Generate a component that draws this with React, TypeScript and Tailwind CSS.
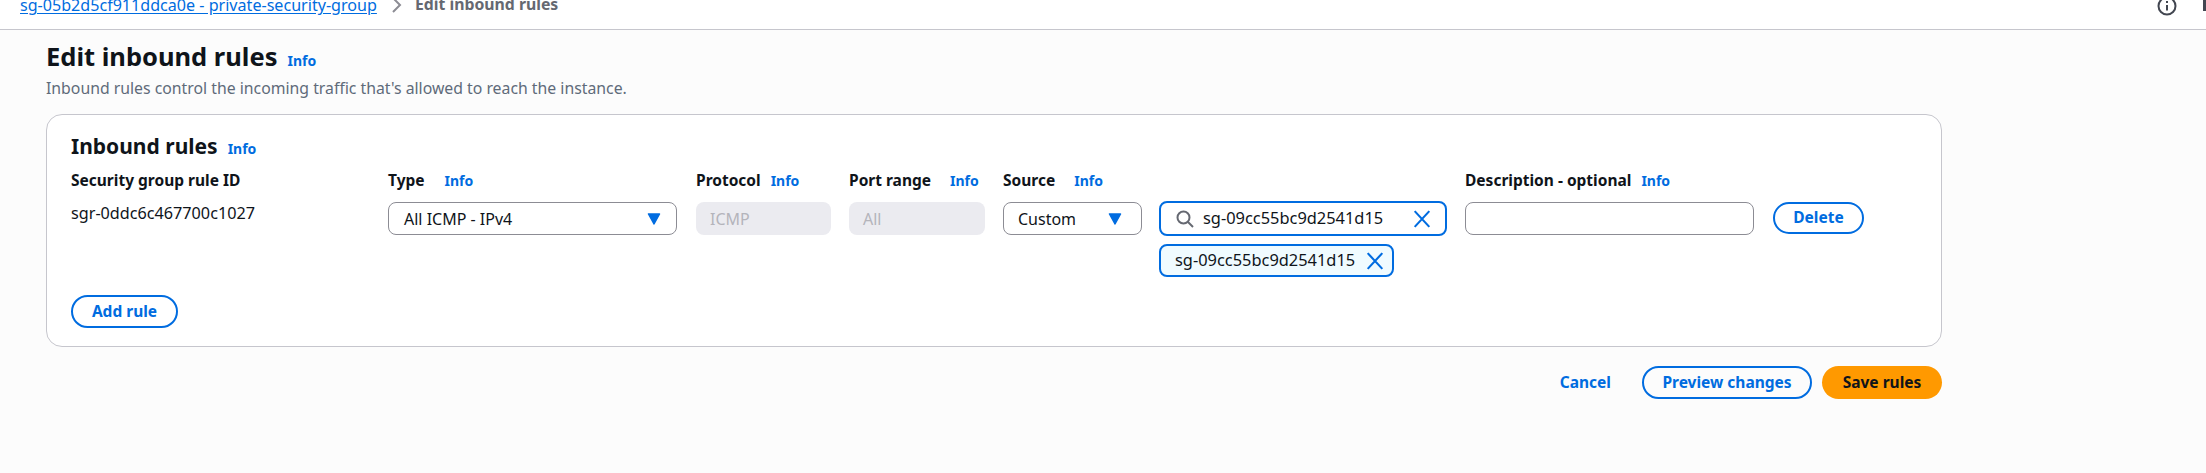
import React from "react";

const font = "font-['Noto_Sans',sans-serif]";

const Info = ({ className = "" }: { className?: string }) => (
  <a className={`text-[14px] leading-[18px] font-bold text-[#006ce0] ${className}`}>Info</a>
);

const Caret = () => (
  <svg width="14" height="12" viewBox="0 0 14 12" className="shrink-0">
    <path d="M1.5 1h11L7 11z" fill="#006ce0" stroke="#006ce0" strokeWidth="1.5" strokeLinejoin="round" />
  </svg>
);

const Cross = ({ size = 18 }: { size?: number }) => (
  <svg width={size} height={size} viewBox="0 0 16 16" className="shrink-0">
    <path d="M1.5 1l13 14M14.5 1l-13 14" stroke="#006ce0" strokeWidth="1.9" fill="none" />
  </svg>
);

const Header = ({ label, gap }: { label: string; gap?: string }) => (
  <div className={`flex items-center ${gap} h-5`}>
    <span className="text-[15.5px] font-bold text-[#0f141a]">{label}</span>
    {gap && <Info />}
  </div>
);

const PillButton = ({ label, className }: { label: string; className: string }) => (
  <button className={`flex items-center justify-center rounded-full border-2 border-[#006ce0] text-[15.5px] font-bold text-[#006ce0] ${className}`}>
    {label}
  </button>
);

export default function App() {
  return (
    <div className={`${font} w-[2206px] h-[473px] overflow-hidden bg-[#fcfcfc]`}>
      <div className="flex items-start h-[30px] overflow-hidden bg-white border-b border-[#c6c6cd] pl-[20px]">
        <div className="flex items-center -mt-[7px] h-[24px] text-[16.1px]">
          <a className="text-[#006ce0] underline underline-offset-2">sg-05b2d5cf911ddca0e - private-security-group</a>
          <svg width="12" height="16" viewBox="0 0 12 16" className="ml-[13px] mr-[13px]">
            <path d="M3 1l7 7-7 7" stroke="#8c8c94" strokeWidth="2" fill="none" />
          </svg>
          <span className="text-[15.8px] font-bold text-[#656871]">Edit inbound rules</span>
        </div>
        <div className="ml-auto flex items-start -mt-[4px] gap-[26px]">
          <svg width="20" height="20" viewBox="0 0 20 20">
            <circle cx="10" cy="10" r="8.5" stroke="#424650" strokeWidth="2" fill="none" />
            <path d="M10 9v5.5M10 5v2" stroke="#424650" strokeWidth="2" />
          </svg>
          <div className="w-[3px] h-[15px] bg-[#424650]" />
        </div>
      </div>

      <div className="pl-[46px] pr-[264px]">
        <div className="flex items-baseline gap-[10px] mt-[7px] h-[38px]">
          <h1 className="text-[25.5px] leading-[38px] font-bold text-[#0f141a]">Edit inbound rules</h1>
          <Info />
        </div>
        <p className="text-[15.8px] leading-[24px] mt-[1px] text-[#5f6b7a]">
          Inbound rules control the incoming traffic that's allowed to reach the instance.
        </p>

        <div className="mt-[14px] h-[233px] rounded-[16px] border border-[#c6c6cd] bg-white pl-[24px] pt-[17px]">
          <div className="flex items-baseline gap-[10px] h-[28px]">
            <h2 className="text-[21px] leading-[28px] font-bold text-[#0f141a]">Inbound rules</h2>
            <Info />
          </div>
          <div className="grid grid-cols-[317px_308px_153px_154px_156px_306px_auto] mt-[11px]">
            <Header label="Security group rule ID" />
            <Header label="Type" gap="gap-[20px]" />
            <Header label="Protocol" gap="gap-[10px]" />
            <Header label="Port range" gap="gap-[19px]" />
            <Header label="Source" gap="gap-[19px]" />
            <div />
            <Header label="Description - optional" gap="gap-[10px]" />
            <div className="row-start-2 pt-[12px] text-[16.2px] leading-[20px] text-[#0f141a]">sgr-0ddc6c467700c1027</div>
            <div className="row-start-2 col-start-2 pt-[11px]">
              <div className="flex items-center justify-between w-[289px] h-[33px] pl-[15px] pr-[15px] rounded-[8px] border border-[#8c8c94] bg-white text-[16px] text-[#0f141a]">
                All ICMP - IPv4
                <Caret />
              </div>
            </div>
            <div className="row-start-2 col-start-3 pt-[11px]">
              <div className="flex items-center w-[135px] h-[33px] pl-[14px] rounded-[8px] bg-[#ebebf0] text-[16px] text-[#b4b4bb]">ICMP</div>
            </div>
            <div className="row-start-2 col-start-4 pt-[11px]">
              <div className="flex items-center w-[136px] h-[33px] pl-[14px] rounded-[8px] bg-[#ebebf0] text-[16px] text-[#b4b4bb]">All</div>
            </div>
            <div className="row-start-2 col-start-5 pt-[11px]">
              <div className="flex items-center justify-between w-[139px] h-[33px] pl-[14px] pr-[19px] rounded-[8px] border border-[#8c8c94] bg-white text-[16px] text-[#0f141a]">
                Custom
                <Caret />
              </div>
            </div>
            <div className="row-start-2 col-start-6 pt-[10px] flex flex-col gap-[8px]">
              <div className="flex items-center w-[288px] h-[35px] pl-[14px] pr-[14px] rounded-[8px] border-2 border-[#006ce0] bg-white text-[16.4px] text-[#0f141a]">
                <svg width="20" height="20" viewBox="0 0 20 20" className="shrink-0 mr-[8px]">
                  <circle cx="8.5" cy="8.5" r="6" stroke="#656871" strokeWidth="2" fill="none" />
                  <path d="M13 13l5 5" stroke="#656871" strokeWidth="2" />
                </svg>
                <span>sg-09cc55bc9d2541d15</span>
                <span className="ml-auto"><Cross /></span>
              </div>
              <div className="flex items-center w-[235px] h-[33px] pl-[14px] pr-[8px] rounded-[8px] border-2 border-[#006ce0] bg-[#f0fbff] text-[16.4px] text-[#0f141a]">
                <span>sg-09cc55bc9d2541d15</span>
                <span className="ml-auto"><Cross /></span>
              </div>
            </div>
            <div className="row-start-2 col-start-7 pt-[11px] flex gap-[19px]">
              <div className="w-[289px] h-[33px] rounded-[8px] border border-[#8c8c94] bg-white" />
              <PillButton label="Delete" className="w-[91px] h-[32px]" />
            </div>
          </div>
          <PillButton label="Add rule" className="w-[107px] h-[33px] mt-[18px]" />
        </div>

        <div className="flex items-center justify-end mt-[19px] h-[33px]">
          <a className="text-[15.5px] font-bold text-[#006ce0] mr-[31px]">Cancel</a>
          <PillButton label="Preview changes" className="w-[170px] h-[33px] mr-[10px]" />
          <button className="w-[120px] h-[33px] rounded-full bg-[#ff9900] text-[15.5px] font-bold text-[#0f141a]">Save rules</button>
        </div>
      </div>
    </div>
  );
}
